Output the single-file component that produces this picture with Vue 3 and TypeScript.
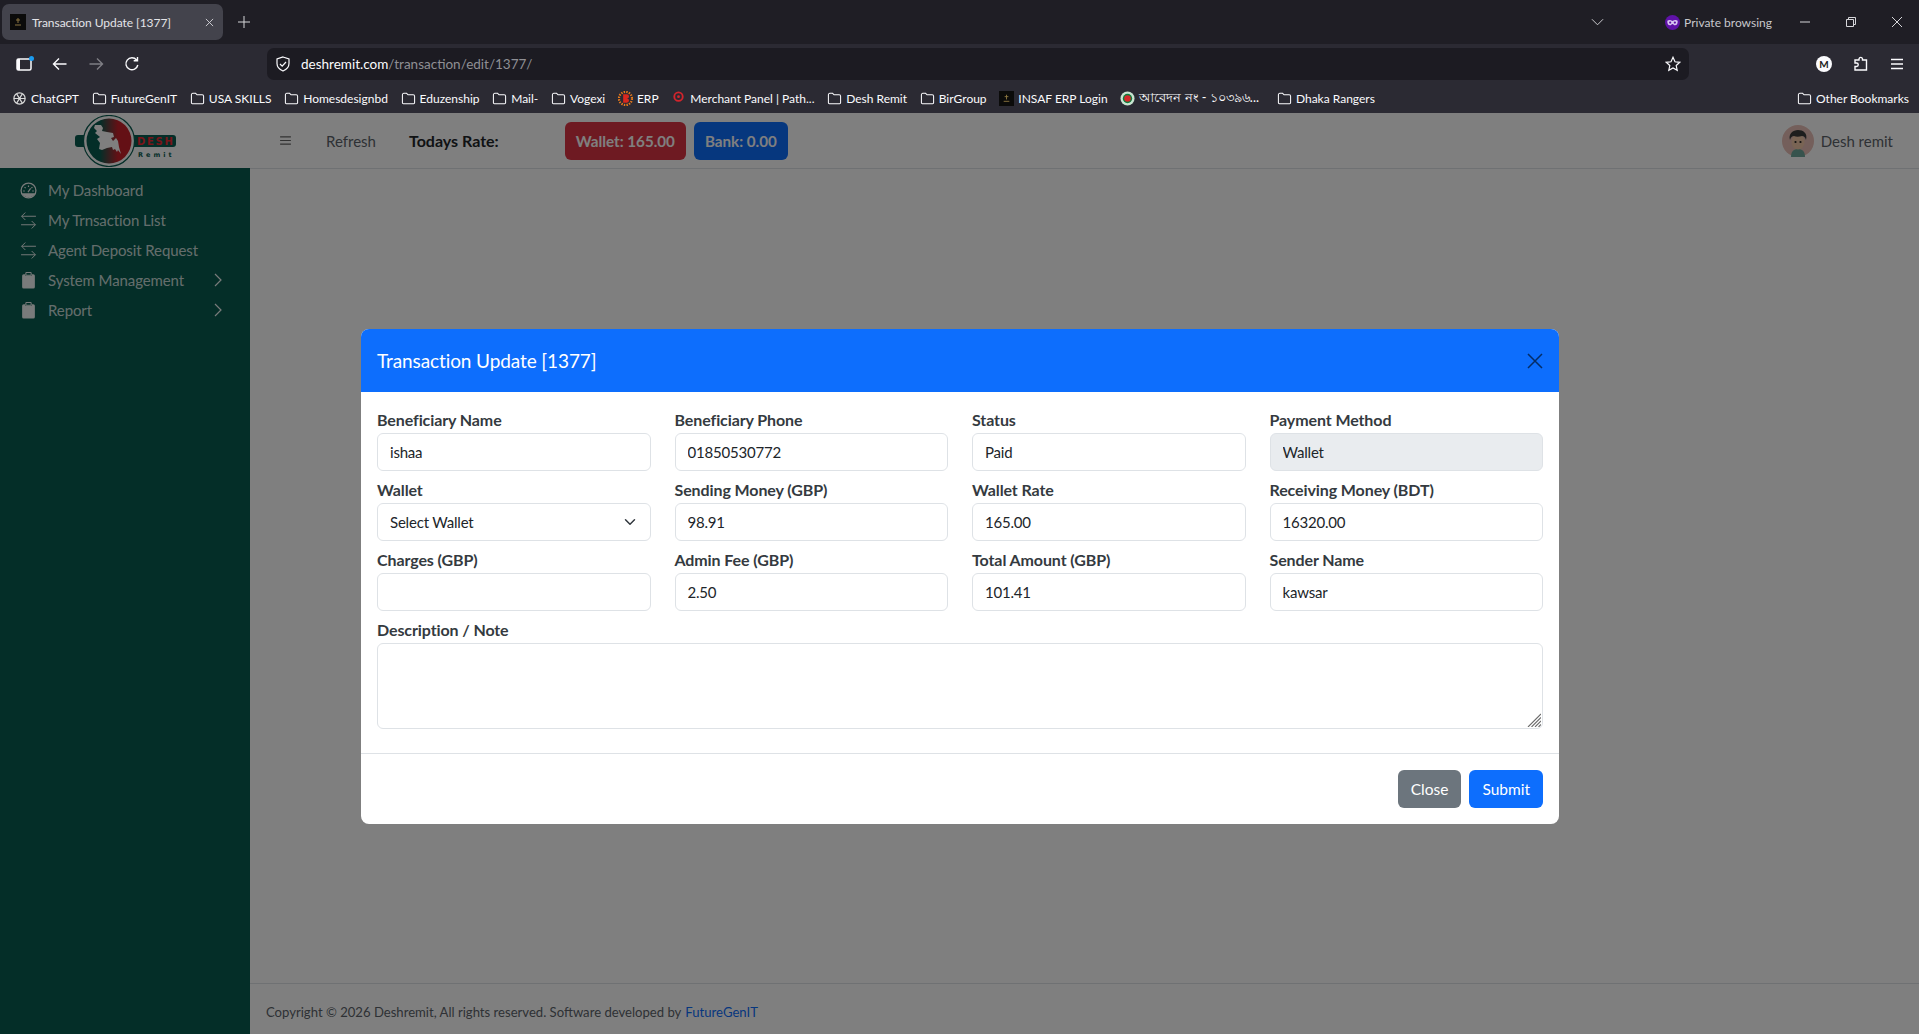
<script setup lang="ts">
import { ref } from 'vue'

type Bookmark = { label: string; icon: string }
type Field = { label: string; value: string; kind?: 'select' | 'readonly' }

const bookmarks: Bookmark[] = [
  { label: 'ChatGPT', icon: 'gpt' },
  { label: 'FutureGenIT', icon: 'folder' },
  { label: 'USA SKILLS', icon: 'folder' },
  { label: 'Homesdesignbd', icon: 'folder' },
  { label: 'Eduzenship', icon: 'folder' },
  { label: 'Mail-', icon: 'folder' },
  { label: 'Vogexi', icon: 'folder' },
  { label: 'ERP', icon: 'erp' },
  { label: 'Merchant Panel | Path...', icon: 'merchant' },
  { label: 'Desh Remit', icon: 'folder' },
  { label: 'BirGroup', icon: 'folder' },
  { label: 'INSAF ERP Login', icon: 'insaf' },
  { label: 'আবেদন নং - ১০৩৯৬...', icon: 'gov' },
  { label: 'Dhaka Rangers', icon: 'folder' }
]

const menu = [
  { label: 'My Dashboard', icon: 'gauge', more: false },
  { label: 'My Trnsaction List', icon: 'swap', more: false },
  { label: 'Agent Deposit Request', icon: 'swap', more: false },
  { label: 'System Management', icon: 'clip', more: true },
  { label: 'Report', icon: 'clip', more: true }
]

const fields = ref<Field[]>([
  { label: 'Beneficiary Name', value: 'ishaa' },
  { label: 'Beneficiary Phone', value: '01850530772' },
  { label: 'Status', value: 'Paid' },
  { label: 'Payment Method', value: 'Wallet', kind: 'readonly' },
  { label: 'Wallet', value: 'Select Wallet', kind: 'select' },
  { label: 'Sending Money (GBP)', value: '98.91' },
  { label: 'Wallet Rate', value: '165.00' },
  { label: 'Receiving Money (BDT)', value: '16320.00' },
  { label: 'Charges (GBP)', value: '' },
  { label: 'Admin Fee (GBP)', value: '2.50' },
  { label: 'Total Amount (GBP)', value: '101.41' },
  { label: 'Sender Name', value: 'kawsar' }
])

const note = ref('')
</script>

<template>
  <div class="root">
    <!-- browser chrome -->
    <div class="tabbar">
      <div class="tab">
        <svg class="favicon" viewBox="0 0 16 16"><rect width="16" height="16" fill="#0b0b0a" /><path d="M8 4v5M6 6h4M5 11h6" stroke="#8a7440" stroke-width="1" /></svg>
        <span class="tab-title">Transaction Update [1377]</span>
        <svg class="tab-x" viewBox="0 0 10 10"><path d="M1 1l8 8M9 1l-8 8" /></svg>
      </div>
      <svg class="tab-new" viewBox="0 0 12 12"><path d="M6 0v12M0 6h12" /></svg>
      <svg class="tab-list" viewBox="0 0 14 8"><path d="M1 1l6 6 6-6" /></svg>
      <svg class="mask" viewBox="0 0 16 16"><circle cx="8" cy="8" r="8" fill="#5f12a8" /><path d="M2.5 6c2-1 3.5-.7 5.500.3 2-1 3.500-1.300 5.500-.3 .3 3-1 5-2.800 5-1.300 0-1.700-1.500-2.700-1.500S6.600 11 5.300 11C3.500 11 2.200 9 2.500 6z" fill="#d9c8f2" /><circle cx="5.500" cy="8" r="1.200" fill="#5f12a8" /><circle cx="10.500" cy="8" r="1.200" fill="#5f12a8" /></svg>
      <span class="private">Private browsing</span>
      <svg class="win" viewBox="0 0 12 12"><path d="M1 6h10" /></svg>
      <svg class="win" viewBox="0 0 12 12"><path d="M1.500 3.500h7v7h-7zM3.500 3.500v-2h7v7h-2" /></svg>
      <svg class="win" viewBox="0 0 12 12"><path d="M1 1l10 10M11 1L1 11" /></svg>
    </div>

    <div class="toolbar">
      <div class="sidebar-btn">
        <svg viewBox="0 0 18 16"><rect x="1" y="3" width="14" height="11" rx="1.500" fill="none" stroke="#fbfbfe" stroke-width="1.500" /><rect x="1" y="3" width="3" height="11" fill="#fbfbfe" /><circle cx="15.500" cy="2.500" r="2.500" fill="#1a9bf0" /></svg>
      </div>
      <svg class="nav" viewBox="0 0 16 16"><path d="M14.500 8h-13M7 2.500L1.500 8 7 13.500" /></svg>
      <svg class="nav dim" viewBox="0 0 16 16"><path d="M1.500 8h13M9 2.500L14.500 8 9 13.500" /></svg>
      <svg class="nav" viewBox="0 0 16 16"><path d="M13.800 9a6 6 0 1 1-1.200-5M13.500 1v3.800H9.700" /></svg>
      <div class="urlbar">
        <svg class="shield" viewBox="0 0 16 16"><path d="M8 1l6 2v4.500c0 3.500-2.500 6-6 7.500-3.500-1.500-6-4-6-7.500V3z" /><path d="M5 8l2.200 2.200L11 6" /></svg>
        <span class="url"><b>deshremit.com</b>/transaction/edit/1377/</span>
        <svg class="star" viewBox="0 0 16 16"><path d="M8 1.300l2 4.500 4.800.5-3.600 3.200 1 4.800L8 11.900l-4.200 2.400 1-4.800L1.200 6.300 6 5.800z" /></svg>
      </div>
      <div class="tool-right">
        <span class="acct">M</span>
        <svg class="nav" viewBox="0 0 16 16"><path d="M6 4V2.800a1.800 1.800 0 0 1 3.500 0V4h4v10H2v-3.500h1.500a1.700 1.700 0 0 0 0-3.500H2V4z" /></svg>
        <svg class="nav last" viewBox="0 0 16 16"><path d="M2 3.500h12M2 8h12M2 12.500h12" /></svg>
      </div>
    </div>

    <div class="bookmarks">
      <div v-for="b in bookmarks" :key="b.label" class="bm" :class="{ 'bm-bn': b.icon === 'gov' }">
        <svg class="bm-icon" viewBox="0 0 16 16">
          <path v-if="b.icon === 'folder'" d="M1.500 4a1.500 1.500 0 0 1 1.500-1.500h3l1.500 1.500h5.500A1.500 1.500 0 0 1 14.500 5.500v7a1 1 0 0 1-1 1h-11a1 1 0 0 1-1-1z" fill="none" stroke="#fbfbfe" stroke-width="1.100" />
          <g v-else-if="b.icon === 'gpt'" fill="none" stroke="#d8d8d8" stroke-width="1.300"><circle cx="8" cy="8" r="6" /><path d="M5 3l6 10M11 3L5 13M2 8h12" /></g>
          <g v-else-if="b.icon === 'erp'"><circle cx="8" cy="8" r="7" fill="none" stroke="#e8791b" stroke-width="2.400" stroke-dasharray="1.500 1.300" /><path d="M5.500 3.500h4a2 2 0 0 1 0 4.500 2.200 2.200 0 0 1 0 4.500h-4z" fill="#d8281e" /></g>
          <g v-else-if="b.icon === 'merchant'"><circle cx="8" cy="6" r="4.500" fill="none" stroke="#d3242c" stroke-width="2" /><circle cx="8" cy="6" r="1.500" fill="#d3242c" /></g>
          <g v-else-if="b.icon === 'insaf'"><rect width="16" height="16" fill="#0b0b0a" /><path d="M8 4v5M6 6h4M5 11h6" stroke="#8a7440" /></g>
          <g v-else><circle cx="8" cy="8" r="7.500" fill="#c8e4d0" /><circle cx="8" cy="8" r="5" fill="#0f7a3c" /><circle cx="8" cy="8" r="3.500" fill="#d5282a" /></g>
        </svg>
        <span>{{ b.label }}</span>
      </div>
      <div class="bm bm-other">
        <svg class="bm-icon" viewBox="0 0 16 16"><path d="M1.500 4a1.500 1.500 0 0 1 1.500-1.500h3l1.500 1.500h5.500A1.500 1.500 0 0 1 14.500 5.500v7a1 1 0 0 1-1 1h-11a1 1 0 0 1-1-1z" fill="none" stroke="#fbfbfe" stroke-width="1.100" /></svg>
        <span>Other Bookmarks</span>
      </div>
    </div>

    <!-- page -->
    <div class="page">
      <aside class="sidebar">
        <div class="brand">
          <svg class="logo" viewBox="0 0 102 52">
            <defs>
              <linearGradient id="flag" x1="0" x2="1" y1="0" y2="0">
                <stop offset="0.3" stop-color="#085c50" />
                <stop offset="0.7" stop-color="#c8202a" />
              </linearGradient>
            </defs>
            <rect x="1" y="20" width="30" height="12" rx="3" fill="#085c50" />
            <rect x="50" y="20" width="52" height="12" rx="3" fill="#085c50" />
            <circle cx="35" cy="26" r="25.500" fill="#fff" stroke="#085c50" stroke-width="1.200" />
            <circle cx="35" cy="26" r="22.500" fill="url(#flag)" />
            <path d="M21 10h6l2 3-1 3 5 1 6 1 1 4-3 1 2 3 3-3 2 3 1 6 2 7-3-4-1 2-2-3-2 1-1-3-5 1-5 2-3-1 1-6-3-4 3-2-5-4 2-2-3-3z" fill="#fff" />
            <text x="63" y="29.800" class="logo-desh">DESH</text>
            <text x="64" y="42" class="logo-remit">Remit</text>
          </svg>
        </div>
        <nav class="menu">
          <a v-for="m in menu" :key="m.label" class="menu-item">
            <svg class="menu-icon" viewBox="0 0 16 16">
              <g v-if="m.icon === 'gauge'"><circle cx="8" cy="8" r="7" fill="none" stroke="#fff" stroke-width="1.200" /><path d="M1.800 10.500h12.400a7 7 0 0 1-12.400 0z" fill="#fff" /><path d="M8 3.200v1.500M4.300 4.800l1 1M11.700 4.800l-1 1M3 8.500h1.500M11.500 8.500H13M7.500 9.500L10 6" fill="none" stroke="#fff" stroke-width="1.100" /></g>
              <g v-else-if="m.icon === 'swap'" fill="none" stroke="#fff" stroke-width=".9"><path d="M15 5H1.500M5 1.500L1.500 5 5 8.500" transform="translate(0 -1)" /><path d="M1 11h13.500M11 7.500l3.500 3.500-3.500 3.500" transform="translate(0 1)" /></g>
              <g v-else><path d="M5 2H3.500A1.500 1.500 0 0 0 2 3.500V14a1.500 1.500 0 0 0 1.500 1.500h9A1.500 1.500 0 0 0 14 14V3.500A1.500 1.500 0 0 0 12.500 2H11v1.500H5z" fill="#fff" /><rect x="5.500" y=".5" width="5" height="2.500" rx=".6" fill="none" stroke="#fff" /></g>
            </svg>
            <span class="menu-label">{{ m.label }}</span>
            <svg v-if="m.more" class="chev" viewBox="0 0 8 14"><path d="M1 1l6 6-6 6" /></svg>
          </a>
        </nav>
      </aside>

      <div class="main">
        <header class="topbar">
          <svg class="burger" viewBox="0 0 12 10"><path d="M0 1h12M0 5h12M0 9h12" /></svg>
          <a class="refresh">Refresh</a>
          <strong class="rate">Todays Rate:</strong>
          <button class="btn btn-red">Wallet: 165.00</button>
          <button class="btn btn-blue">Bank: 0.00</button>
          <div class="user">
            <svg class="avatar" viewBox="0 0 32 32">
              <circle cx="16" cy="16" r="16" fill="#e8bfb6" />
              <path d="M9 32c0-6 3-8 7-8s7 2 7 8z" fill="#6fa79b" />
              <ellipse cx="16" cy="17" rx="6.500" ry="7.500" fill="#f2c9a8" />
              <path d="M8 15c-2-6 3-10 8-10s10 3 8 10c-1-3-2-4-4-4-3 1-6 1-8 0-2 0-3 1-4 4z" fill="#3a3a3a" />
              <circle cx="13.500" cy="17" r="1.100" fill="#222" />
              <circle cx="18.500" cy="17" r="1.100" fill="#222" />
            </svg>
            <span>Desh remit</span>
          </div>
        </header>
        <div class="content"></div>
        <footer class="footer">
          Copyright © 2026 Deshremit, All rights reserved. Software developed by <a>FutureGenIT</a>
        </footer>
      </div>

      <!-- modal open over the page -->
      <div class="backdrop">
        <div class="modal">
          <div class="modal-head">
            <h5>Transaction Update [1377]</h5>
            <svg class="modal-x" viewBox="0 0 16 16"><path d="M1 1l14 14M15 1L1 15" /></svg>
          </div>
          <div class="modal-body">
            <div class="grid">
              <div v-for="f in fields" :key="f.label" class="field">
                <label>{{ f.label }}</label>
                <select v-if="f.kind === 'select'" class="control select">
                  <option>{{ f.value }}</option>
                </select>
                <input v-else class="control" :class="{ readonly: f.kind === 'readonly' }" :readonly="f.kind === 'readonly'" v-model="f.value" />
              </div>
            </div>
            <div class="field">
              <label>Description / Note</label>
              <div class="area-wrap">
                <textarea class="control area" rows="3" v-model="note"></textarea>
                <svg class="grip" viewBox="0 0 14 14"><path d="M14 1L1 14M14 4.500L4.500 14M14 8L8 14M14 11.500L11.500 14" /></svg>
              </div>
            </div>
          </div>
          <div class="modal-foot">
            <button class="btn btn-grey">Close</button>
            <button class="btn btn-primary">Submit</button>
          </div>
        </div>
      </div>
    </div>
  </div>
</template>

<style scoped>
.root {
  height: 100vh;
  display: flex;
  flex-direction: column;
  overflow: hidden;
  font-family: Lato, "Noto Sans", sans-serif;
}

/* browser chrome */
.tabbar {
  height: 44px;
  flex: none;
  display: flex;
  align-items: center;
  background: #1f1e25;
  color: #fbfbfe;
  font-size: 12px;
  padding-left: 2px;
}
.tab {
  width: 221px;
  height: 36px;
  display: flex;
  align-items: center;
  padding: 0 9px 0 8px;
  box-sizing: border-box;
  background: #43434c;
  border-radius: 7px;
}
.favicon {
  width: 16px;
  height: 16px;
  margin-right: 6px;
}
.tab-title {
  flex: 1;
  color: #e4e4e8;
  letter-spacing: -0.05px;
}
.tab-x {
  width: 9px;
  height: 9px;
}
.tab-x path,
.tab-new path,
.tab-list path,
.win path {
  fill: none;
  stroke: #d6d6da;
  stroke-width: 1;
}
.tab-new {
  width: 12px;
  height: 12px;
  margin-left: 15px;
}
.tab-list {
  width: 13px;
  height: 8px;
  margin-left: auto;
  margin-right: 61px;
}
.mask {
  width: 15px;
  height: 15px;
  margin-right: 4px;
}
.private {
  color: #c8c8cc;
  margin-right: 27px;
}
.win {
  width: 12px;
  height: 12px;
  margin-right: 34px;
}
.win:last-child {
  margin-right: 16px;
}
.toolbar {
  height: 36px;
  padding-top: 4px;
  box-sizing: border-box;
  flex: none;
  display: flex;
  align-items: center;
  background: #2b2a33;
}
.sidebar-btn {
  width: 18px;
  height: 16px;
  flex: none;
  margin-left: 16px;
  margin-right: 18px;
}
.sidebar-btn svg {
  display: block;
}
.nav {
  width: 16px;
  height: 16px;
  margin-right: 20px;
  flex: none;
}
.nav.last {
  margin-right: 0;
}
.nav path {
  fill: none;
  stroke: #fbfbfe;
  stroke-width: 1.400;
}
.nav.dim {
  opacity: 0.4;
}
.urlbar {
  width: 1422px;
  height: 32px;
  margin-left: 107px;
  flex: none;
  display: flex;
  align-items: center;
  background: #1c1b22;
  border-radius: 7px;
  padding: 0 8px;
  box-sizing: border-box;
  font-size: 13.5px;
}
.shield {
  width: 16px;
  height: 16px;
  margin-right: 10px;
}
.shield path {
  fill: none;
  stroke: #fbfbfe;
  stroke-width: 1.200;
}
.url {
  flex: 1;
  color: #8f8f94;
}
.url b {
  font-weight: 400;
  color: #fbfbfe;
}
.star {
  width: 16px;
  height: 16px;
}
.star path {
  fill: none;
  stroke: #fbfbfe;
  stroke-width: 1.200;
}
.tool-right {
  display: flex;
  align-items: center;
  flex: none;
  margin-left: 127px;
}
.acct {
  width: 16px;
  height: 16px;
  border-radius: 50%;
  background: #fbfbfe;
  color: #1c1b22;
  font-size: 10px;
  font-weight: 700;
  text-align: center;
  line-height: 16px;
  margin-right: 21px;
}
.bookmarks {
  height: 33px;
  padding: 3px 10px 0 12px;
  flex: none;
  display: flex;
  align-items: center;
  background: #2b2a33;
  color: #fbfbfe;
  font-size: 12px;
  box-sizing: border-box;
}
.bm {
  display: flex;
  align-items: center;
  margin-right: 12.700px;
  white-space: nowrap;
}
.bm-bn {
  font-size: 12.800px;
  margin-right: 18px;
}
.bm-icon {
  width: 15px;
  height: 15px;
  margin-right: 4px;
  flex: none;
}
.bm-other {
  margin-left: auto;
  margin-right: 0;
}

/* page */
.page {
  flex: 1;
  display: flex;
  position: relative;
  min-height: 0;
  background: #fff;
}
.sidebar {
  width: 250px;
  flex: none;
  background: #085c50;
  color: #fff;
}
.brand {
  height: 55px;
  background: #fff;
  display: flex;
  align-items: center;
  justify-content: center;
}
.logo {
  width: 102px;
  height: 52px;
}
.logo-desh {
  font: 700 10px "DejaVu Sans", sans-serif;
  letter-spacing: 1.700px;
  fill: #ee2a33;
}
.logo-remit {
  font: 700 6.500px "DejaVu Sans", sans-serif;
  letter-spacing: 3px;
  fill: #085c50;
}
.menu {
  padding-top: 7px;
}
.menu-item {
  height: 30px;
  display: flex;
  align-items: center;
  padding: 0 28px 0 20px;
  font-size: 15px;
  letter-spacing: -0.1px;
  color: rgba(255, 255, 255, 0.8);
}
.menu-icon {
  width: 17px;
  height: 17px;
  margin-right: 11px;
  opacity: 0.95;
}
.menu-label {
  flex: 1;
}
.chev {
  width: 8px;
  height: 14px;
}
.chev path {
  fill: none;
  stroke: rgba(255, 255, 255, 0.95);
  stroke-width: 1.200;
}
.main {
  flex: 1;
  display: flex;
  flex-direction: column;
  min-width: 0;
}
.topbar {
  height: 56px;
  flex: none;
  box-sizing: border-box;
  border-bottom: 1px solid #dee2e6;
  display: flex;
  align-items: center;
  padding: 0 26px 0 30px;
}
.burger {
  width: 11px;
  height: 9px;
  margin-right: 35px;
}
.burger path {
  stroke: #666;
  stroke-width: 1.300;
}
.refresh {
  color: #5c636a;
  font-size: 15px;
  margin-right: 33px;
}
.rate {
  color: #212529;
  font-size: 16px;
  margin-right: 66px;
}
.btn {
  height: 38px;
  border: 0;
  border-radius: 6px;
  color: #fff;
  font-family: inherit;
  font-size: 15.200px;
  padding: 0 11px;
}
.btn-red {
  background: #dc3545;
  font-weight: 700;
  margin-right: 8px;
}
.btn-blue {
  background: #0d6efd;
  font-weight: 700;
}
.user {
  margin-left: auto;
  display: flex;
  align-items: center;
  color: #5c636a;
  font-size: 15px;
}
.avatar {
  width: 32px;
  height: 32px;
  margin-right: 7px;
}
.content {
  flex: 1;
}
.footer {
  height: 51px;
  flex: none;
  box-sizing: border-box;
  border-top: 1px solid #dee2e6;
  display: flex;
  align-items: center;
  gap: 4px;
  padding-left: 16px;
  padding-top: 6px;
  font-size: 13.100px;
  color: #5c636a;
}
.footer a {
  color: #0d6efd;
}

/* modal */
.backdrop {
  position: absolute;
  inset: 0;
  background: rgba(0, 0, 0, 0.5);
  display: flex;
  justify-content: center;
  align-items: flex-start;
  padding-top: 216px;
}
.modal {
  width: 1198px;
  margin-left: 1px;
  background: #fff;
  border-radius: 8px;
  overflow: hidden;
  color: #212529;
}
.modal-head {
  height: 63px;
  background: #0d6efd;
  display: flex;
  align-items: center;
  justify-content: space-between;
  padding: 0 16px;
  box-sizing: border-box;
}
.modal-head h5 {
  margin: 0;
  color: #fff;
  font-size: 19px;
  font-weight: 400;
  letter-spacing: -0.1px;
}
.modal-x {
  width: 16px;
  height: 16px;
}
.modal-x path {
  fill: none;
  stroke: #052c65;
  stroke-width: 1.500;
}
.modal-body {
  padding: 16px 16px 17px;
}
.grid {
  display: grid;
  grid-template-columns: repeat(4, 1fr);
  column-gap: 24px;
}
.field {
  margin-bottom: 7px;
  min-width: 0;
}
.field label {
  display: block;
  margin-bottom: 1px;
  font-size: 16px;
  font-weight: 700;
  line-height: 24px;
  color: #343a40;
  letter-spacing: -0.1px;
}
.control {
  display: block;
  width: 100%;
  height: 38px;
  box-sizing: border-box;
  padding: 5px 12px 6px;
  border: 1px solid #dee2e6;
  border-radius: 6px;
  background: #fff;
  font-family: inherit;
  font-size: 15px;
  letter-spacing: -0.2px;
  color: #212529;
  outline: none;
}
.readonly {
  background: #e9ecef;
}
.select {
  appearance: none;
  padding-right: 36px;
  background-image: url("data:image/svg+xml,%3csvg xmlns='http://www.w3.org/2000/svg' viewBox='0 0 16 16'%3e%3cpath fill='none' stroke='%23343a40' stroke-linecap='round' stroke-linejoin='round' stroke-width='2' d='m2 5 6 6 6-6'/%3e%3c/svg%3e");
  background-repeat: no-repeat;
  background-position: right 12px center;
  background-size: 16px 12px;
}
.area-wrap {
  position: relative;
}
.area {
  height: 86px;
  resize: none;
}
.grip {
  position: absolute;
  right: 2px;
  bottom: 2px;
  width: 14px;
  height: 14px;
  pointer-events: none;
}
.grip path {
  fill: none;
  stroke: #6b6b6b;
  stroke-width: 1.100;
}
.modal-foot {
  border-top: 1px solid #dee2e6;
  padding: 16px;
  display: flex;
  justify-content: flex-end;
  gap: 8px;
}
.btn-grey {
  background: #6c757d;
}
.btn-primary {
  background: #0d6efd;
}
.modal-foot .btn {
  padding: 0 13px;
  font-size: 15.500px;
}
</style>
